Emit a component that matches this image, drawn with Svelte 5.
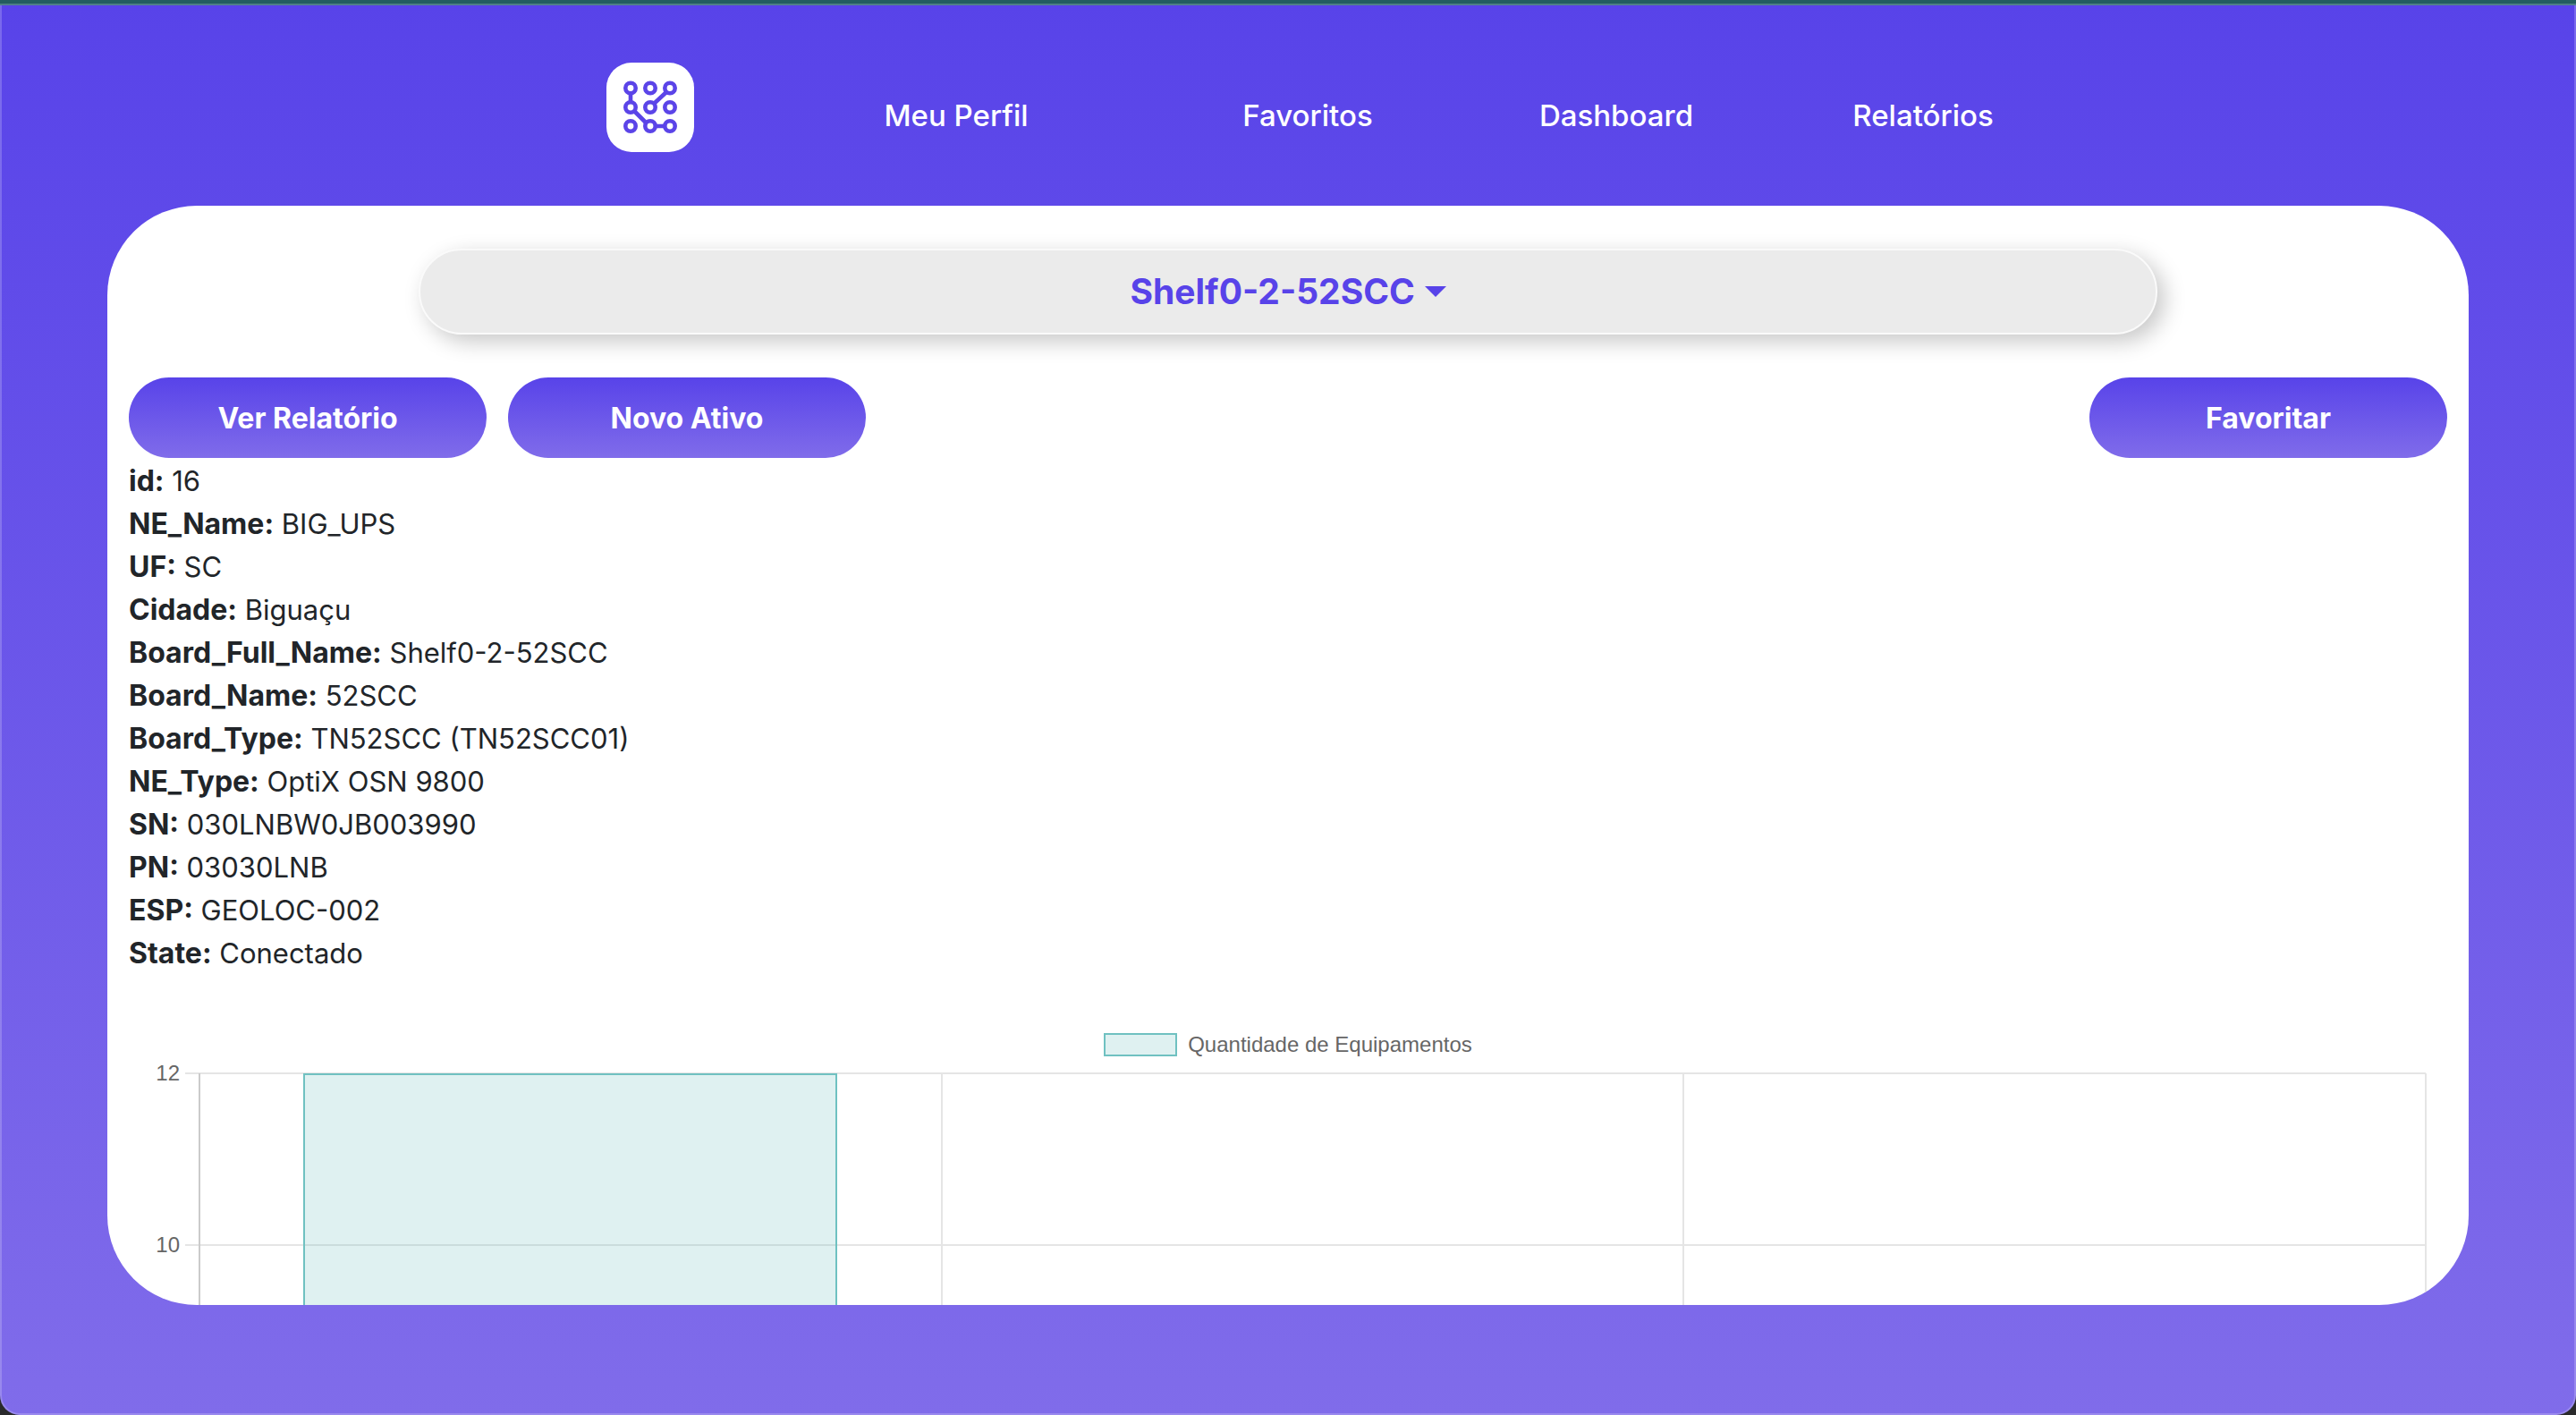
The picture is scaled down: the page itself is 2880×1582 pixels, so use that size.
<script>
  const links = ['Meu Perfil', 'Favoritos', 'Dashboard', 'Relatórios'];

  const details = [
    ['id', '16'],
    ['NE_Name', 'BIG_UPS'],
    ['UF', 'SC'],
    ['Cidade', 'Biguaçu'],
    ['Board_Full_Name', 'Shelf0-2-52SCC'],
    ['Board_Name', '52SCC'],
    ['Board_Type', 'TN52SCC (TN52SCC01)'],
    ['NE_Type', 'OptiX OSN 9800'],
    ['SN', '030LNBW0JB003990'],
    ['PN', '03030LNB'],
    ['ESP', 'GEOLOC-002'],
    ['State', 'Conectado']
  ];

  // Chart geometry
  const values = [12, 0, 0];
  const maxValue = 12;
  const ticks = [12, 10];
  const unit = 96;
  const top = 16;
  const axisX = 79;
  const tickX = 63;
  const rightPad = 24;
  const barShare = 0.72;

  let chartWidth = $state(2592);
  let chartHeight = $state(273);

  const step = $derived((chartWidth - rightPad - axisX) / values.length);
  const gridX = $derived([1, 2, 3].map((i) => Math.round(axisX + step * i)));
  const bars = $derived(
    values
      .map((v, i) => ({
        v,
        x: Math.round(axisX + step * (i + (1 - barShare) / 2)),
        w: Math.round(step * barShare),
        y: top + (maxValue - v) * unit
      }))
      .filter((b) => b.v > 0)
  );
</script>

<div class="page">
  <div class="strip"></div>
  <header>
    <a class="logo" href="#inicio" aria-label="Início">
      <svg viewBox="0 0 98 100" fill="none" stroke="#5b44e8" stroke-width="4.6">
        <path d="M27 36v8M31 54l14 14M55 71h10M67 33L53 46" />
        <circle cx="27" cy="28.5" r="5.7" />
        <circle cx="49" cy="28.5" r="5.7" />
        <circle cx="71" cy="28.5" r="5.7" />
        <circle cx="27" cy="50" r="5.7" />
        <circle cx="49" cy="50" r="5.7" />
        <circle cx="71" cy="50" r="5.7" />
        <circle cx="27" cy="71" r="5.7" />
        <circle cx="49" cy="71" r="5.7" />
        <circle cx="71" cy="71" r="5.7" />
      </svg>
    </a>
    <nav>
      {#each links as link}
        <a href="#menu">{link}</a>
      {/each}
    </nav>
  </header>

  <main>
    <label class="picker">
      <select aria-label="Equipamento">
        <option>Shelf0-2-52SCC</option>
      </select>
      <svg class="caret" viewBox="0 0 24 12"><path d="M0 0h24L12 12z" fill="#5843e9" /></svg>
    </label>

    <div class="actions">
      <button>Ver Relatório</button>
      <button>Novo Ativo</button>
      <button class="last">Favoritar</button>
    </div>

    <ul>
      {#each details as [name, value]}
        <li><b>{name}:</b> {value}</li>
      {/each}
    </ul>

    <div class="legend"><span class="swatch"></span>Quantidade de Equipamentos</div>

    <div class="chart" bind:clientWidth={chartWidth} bind:clientHeight={chartHeight}>
      <svg width={chartWidth} height={chartHeight}>
        {#each ticks as t}
          <line class="grid" x1={tickX} x2={chartWidth - rightPad} y1={top + (maxValue - t) * unit} y2={top + (maxValue - t) * unit} />
          <text x={tickX - 6} y={top + (maxValue - t) * unit + 8} text-anchor="end">{t}</text>
        {/each}
        {#each gridX as x}
          <line class="grid" x1={x} x2={x} y1={top} y2={chartHeight} />
        {/each}
        <line class="axis" x1={axisX} x2={axisX} y1={top} y2={chartHeight} />
        {#each bars as b}
          <rect x={b.x} y={b.y} width={b.w} height={b.v * unit} />
          <path class="edge" d="M{b.x + 1} {chartHeight}V{b.y + 1}H{b.x + b.w - 1}V{chartHeight}" />
        {/each}
      </svg>
    </div>
  </main>
</div>

<style>
  :global(body) {
    margin: 0;
    background: #2a2a2c;
  }
  .page {
    box-sizing: border-box;
    height: 100vh;
    padding-bottom: 123px;
    display: flex;
    flex-direction: column;
    font-family: Inter, 'Liberation Sans', sans-serif;
    font-size: 32px;
    line-height: 48px;
    color: #212529;
    background: linear-gradient(#5843e9, #806cea);
    border-radius: 0 0 22px 22px;
    box-shadow: inset 0 0 0 2px rgba(255, 255, 255, 0.2);
    overflow: hidden;
  }
  .strip {
    flex: none;
    height: 4px;
    background: #235d5e;
    border-bottom: 2px solid #4f7f87;
  }
  header {
    flex: none;
    height: 160px;
    padding-top: 64px;
    display: grid;
    grid-template-columns: 556fr 342fr 342fr 444fr 246fr 440fr 510fr;
    justify-items: center;
    align-items: start;
  }
  .logo {
    grid-column: 2;
    width: 98px;
    height: 100px;
    border-radius: 28px;
    background: #fff;
  }
  .logo svg {
    display: block;
  }
  nav {
    display: contents;
  }
  nav a {
    margin-top: 32px;
    font-size: 33px;
    line-height: 54px;
    font-weight: 500;
    color: #fff;
    text-decoration: none;
    white-space: nowrap;
  }
  main {
    flex: 1;
    min-height: 0;
    box-sizing: border-box;
    margin: 0 120px;
    padding: 48px 24px 0;
    display: flex;
    flex-direction: column;
    background: #fff;
    border-radius: 100px;
    overflow: hidden;
  }
  .picker {
    flex: none;
    box-sizing: border-box;
    align-self: center;
    width: 75%;
    height: 96px;
    display: flex;
    align-items: center;
    justify-content: center;
    gap: 10px;
    border: 2px solid #fafafa;
    border-radius: 48px;
    background: #ebebeb;
    box-shadow: 8px 8px 24px rgba(0, 0, 0, 0.22);
  }
  select {
    appearance: none;
    border: 0;
    margin: 0;
    padding: 0;
    background: none;
    font: 700 39px/60px Inter, 'Liberation Sans', sans-serif;
    color: #5843e9;
  }
  .caret {
    width: 24px;
    height: 12px;
  }
  .actions {
    flex: none;
    display: flex;
    gap: 24px;
    margin-top: 48px;
  }
  button {
    width: 400px;
    height: 90px;
    padding: 2px 0 0;
    border: 0;
    border-radius: 45px;
    background: linear-gradient(#5843e9, #806cea);
    font: 700 32px/48px Inter, 'Liberation Sans', sans-serif;
    color: #fff;
  }
  .last {
    margin-left: auto;
  }
  ul {
    flex: none;
    list-style: none;
    margin: 0;
    padding: 2px 0 0;
    font-size: 31px;
  }
  li {
    height: 48px;
  }
  b {
    font-size: 32px;
  }
  .legend {
    flex: none;
    margin-top: 62px;
    height: 32px;
    display: flex;
    align-items: center;
    justify-content: center;
    gap: 12px;
    font: 24px/32px 'Liberation Sans', sans-serif;
    color: #666;
  }
  .swatch {
    box-sizing: border-box;
    width: 82px;
    height: 26px;
    border: 2px solid #6fc1c1;
    background: #dff1f1;
  }
  .chart {
    flex: 1;
    min-height: 0;
    overflow: hidden;
  }
  .chart svg {
    display: block;
  }
  .chart text {
    font: 24px 'Liberation Sans', sans-serif;
    fill: #666;
  }
  .grid {
    stroke: #e5e5e5;
    stroke-width: 2;
  }
  .axis {
    stroke: #cbcbcb;
    stroke-width: 2;
  }
  rect {
    fill: rgba(95, 185, 185, 0.2);
  }
  .edge {
    fill: none;
    stroke: #6fc1c1;
    stroke-width: 2;
  }
</style>
